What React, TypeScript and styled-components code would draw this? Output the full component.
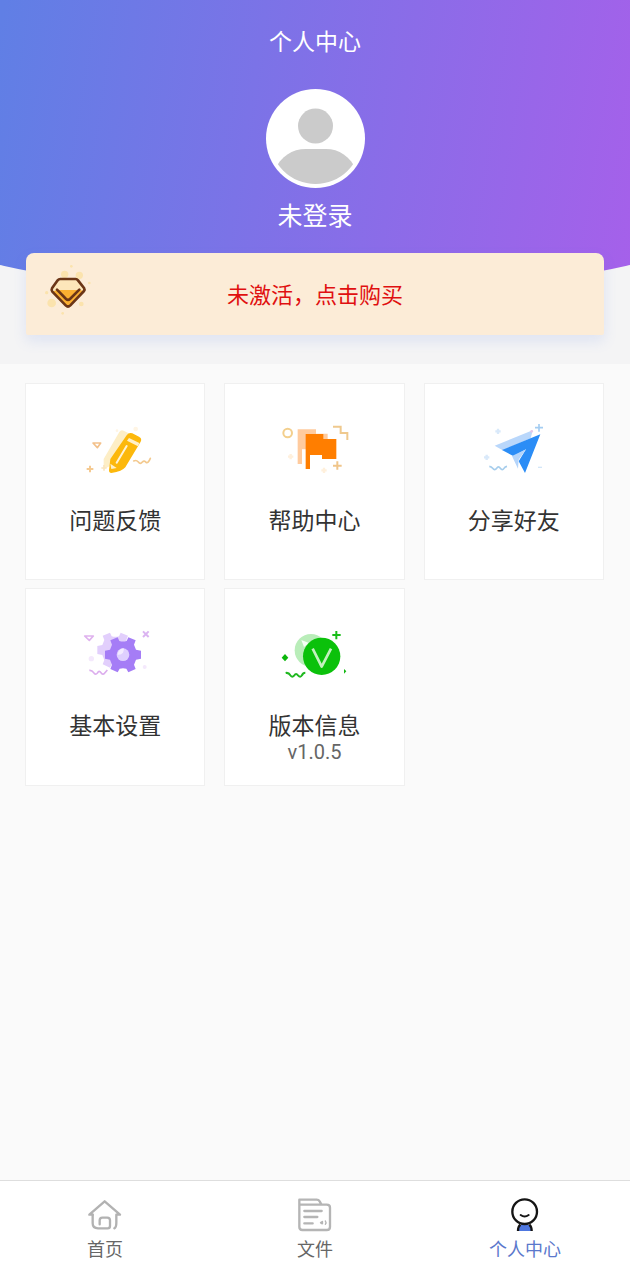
import type { ReactNode } from 'react';
import styled, { createGlobalStyle } from 'styled-components';

const GlobalStyle = createGlobalStyle`
  * { box-sizing: border-box; }
  body {
    margin: 0;
    background: #fafafa;
    font-family: "Noto Sans CJK SC", "Noto Sans", sans-serif;
  }
  button {
    border: 0;
    margin: 0;
    font-family: inherit;
    cursor: pointer;
  }
`;

const Page = styled.div`
  min-height: 100vh;
  display: flex;
  flex-direction: column;
`;

const Hero = styled.header`
  position: relative;
  overflow: hidden;
  display: flex;
  flex-direction: column;
  align-items: center;
  padding: 23px 26px 29px;
  background: #f4f4f5;

  &::before {
    content: "";
    position: absolute;
    top: 0;
    left: -20%;
    width: 140%;
    height: 295px;
    border-radius: 0 0 50% 50% / 0 0 100px 100px;
    background: linear-gradient(99deg, #607fe5 14%, #a660ea 87%);
  }

  > * { position: relative; }
`;

const Title = styled.h1`
  margin: 0 0 32px;
  font-size: 23px;
  line-height: 34px;
  font-weight: 400;
  color: #fff;
`;

const Profile = styled.button`
  display: flex;
  flex-direction: column;
  align-items: center;
  gap: 9px;
  margin-bottom: 22px;
  padding: 0;
  background: none;
  color: #fff;
  font-size: 25px;
  line-height: 34px;
`;

const Banner = styled.button`
  width: 100%;
  display: grid;
  grid-template-columns: 48px 1fr 48px;
  align-items: center;
  padding: 11px 18px;
  border-radius: 8px 8px 2px 2px;
  background: #fcecd7;
  box-shadow: 0 6px 14px rgba(90, 130, 230, 0.14);
  color: #e01010;
  font-size: 22px;
  line-height: 32px;

  > span { padding-bottom: 3px; }
`;

const Grid = styled.main`
  flex: 1;
  display: grid;
  grid-template-columns: repeat(3, 1fr);
  align-content: start;
  gap: 8px 19px;
  padding: 19px 26px 19px 25px;
`;

const Card = styled.button`
  && { border: 1px solid #f0f0f0; }
  display: flex;
  flex-direction: column;
  align-items: center;
  min-height: 197px;
  padding: 36px 0 19px;
  background: #fff;
`;

const CardLabel = styled.span`
  margin-top: 23px;
  font-size: 23px;
  line-height: 28px;
  color: #333;
`;

const CardNote = styled.span`
  font-family: Roboto, sans-serif;
  font-size: 20px;
  line-height: 28px;
  color: #666;
`;

const TabBar = styled.nav`
  display: grid;
  grid-template-columns: repeat(3, 1fr);
  height: 100px;
  border-top: 1px solid #dedede;
  background: #fff;
`;

const Tab = styled.a<{ $active?: boolean }>`
  display: flex;
  flex-direction: column;
  align-items: center;
  padding-top: 16px;
  font-size: 18px;
  line-height: 30px;
  text-decoration: none;
  color: ${({ $active }) => ($active ? '#5b78cc' : '#666')};
`;

const Avatar = () => (
  <svg width="99" height="99" viewBox="0 0 99 99" aria-hidden="true">
    <defs>
      <clipPath id="avatar-clip"><circle cx="49.500" cy="49.500" r="45.500" /></clipPath>
    </defs>
    <circle cx="49.500" cy="49.500" r="49.500" fill="#fff" />
    <g fill="#cbcbcb" clipPath="url(#avatar-clip)">
      <circle cx="49.500" cy="37" r="17.500" />
      <path d="M8 82C15 67 26 60 40 60H60C73 60 84 67 91 82V99H8Z" />
    </g>
  </svg>
);

const GemIcon = () => (
  <svg width="48" height="60" viewBox="72 72 144 180" fill="none" aria-hidden="true">
    <g fill="#fbe3ad">
      <circle cx="134" cy="103" r="11" />
      <circle cx="178" cy="106" r="11" />
      <circle cx="95" cy="189" r="13" />
      <circle cx="154" cy="79" r="4" />
      <circle cx="80" cy="158" r="5" />
      <circle cx="184" cy="192" r="7" />
      <circle cx="208" cy="129" r="4" />
      <circle cx="128" cy="220" r="4" />
    </g>
    <path d="M121 117H167Q171 117 174 121L192 144Q195 149 192 153L151 196Q144 203 137 196L97 155Q93 150 96 145L113 121Q116 117 121 117Z" fill="#fde6ba" />
    <path d="M110 150H178L192 153L151 196Q144 203 137 196L97 155Z" fill="#fbb031" />
    <path d="M121 117H167Q171 117 174 121L192 144Q195 149 192 153L151 196Q144 203 137 196L97 155Q93 150 96 145L113 121Q116 117 121 117Z" stroke="#6b3617" strokeWidth="8" strokeLinejoin="round" />
    <path d="M111 149L138 177Q144 182 150 177L178 149" stroke="#6b3617" strokeWidth="8" strokeLinecap="round" />
  </svg>
);

const CardIcon = ({ children }: { children: ReactNode }) => (
  <svg width="80" height="62" viewBox="-2 15 240 186" fill="none" aria-hidden="true">
    {children}
  </svg>
);

const PencilIcon = () => (
  <CardIcon>
    <path d="M84 132L131 51Q136 43 144 47L162 56L107 151L84 163Z" fill="#fdeec6" />
    <path d="M104 132L153 61Q160 51 170 55L190 65Q200 70 195 80L149 157Q140 169 107 174Q100 174 100 166Z" fill="#fcb80c" />
    <path d="M160 69L191 84L187 94L154 77Z" fill="#fff0c9" />
    <path d="M153 93L123 143" stroke="#fff3d5" strokeWidth="6" strokeLinecap="round" />
    <path d="M104 146L123 159L107 162Z" fill="#fff0c9" />
    <path d="M52 84H75L65 98Z" stroke="#f3c18b" strokeWidth="5" strokeLinejoin="round" />
    <path d="M43 152V172M33 162H53" stroke="#f5ca91" strokeWidth="6" />
    <path d="M85 150V167M77 159H93" stroke="#fae5bf" strokeWidth="5" />
    <path d="M174 138Q182 134 188 141Q194 149 200 141Q206 135 211 142Q217 147 224 130" stroke="#f3c98e" strokeWidth="5" strokeLinecap="round" />
    <circle cx="180" cy="42" r="7" fill="#fff5e4" />
    <circle cx="124" cy="47" r="4" fill="#fff5e4" />
  </CardIcon>
);

const FlagIcon = () => (
  <CardIcon>
    <path d="M69 43H124V56H159V72H100V103H82V147H69Z" fill="#ffcb9e" />
    <path d="M93 57H146V72H185V132H142V120H106V162H93Z" fill="#ff7e00" />
    <circle cx="39" cy="54" r="13" stroke="#f3cf8d" strokeWidth="6" />
    <path d="M175 35H198V54H218V75" stroke="#efc98e" strokeWidth="6" />
    <path d="M188 139V164M175 152H201" stroke="#f0c58a" strokeWidth="6" />
    <path d="M48 117V133M40 125H56M148 158V174M140 166H156" stroke="#fff0dc" strokeWidth="7" />
  </CardIcon>
);

const PlaneIcon = () => (
  <CardIcon>
    <path d="M60 92L174 46L168 70L84 106Z" fill="#b9d7fb" />
    <path d="M82 105L197 58L151 174L132 139L154 103L117 124Z" fill="#2b8df6" />
    <path d="M112 123L154 103L132 134L130 161L120 140Z" fill="#b5d5fb" />
    <path d="M193 27V50M181 38H205" stroke="#a4cdf2" strokeWidth="5" />
    <path d="M70 41V57M62 49H78M36 119V135M28 127H44" stroke="#d9e9fa" strokeWidth="7" />
    <path d="M44 154Q50 155 54 160Q60 168 66 160Q71 151 77 160Q83 168 88 160Q91 155 97 154" stroke="#a6cdec" strokeWidth="5" />
    <path d="M190 157H202" stroke="#d3e6f8" strokeWidth="4" />
    <circle cx="171" cy="49" r="4" fill="#e6c8e9" />
  </CardIcon>
);

const GEAR =
  'M-16 -52L-11 -41Q0 -38 11 -41L16 -52L38 -43L33 -30L39 -15L54 -12V12L39 15L33 30L38 43L16 53L10 42Q0 39 -10 42L-16 53L-38 43L-33 30L-39 15L-54 12V-12L-39 -15L-33 -30L-38 -43Z';

const GearIcon = () => (
  <CardIcon>
    <path transform="translate(119 90)" d={GEAR} fill="#e2cffc" />
    <path transform="translate(142 104)" d={GEAR} fill="#a57df6" />
    <circle cx="142" cy="104" r="19" fill="#dfd0ff" />
    <path d="M126 104Q137 105 142 98Q146 91 144 85A19 19 0 0 0 126 104Z" fill="#f3ecff" />
    <path d="M27 48H53L41 61Z" stroke="#dfb2ee" strokeWidth="5" strokeLinejoin="round" />
    <path d="M202 34L219 51M219 34L202 51" stroke="#dbb4f1" strokeWidth="6" />
    <path d="M41 151Q49 150 54 158Q59 167 66 158Q70 150 76 158Q83 167 88 158L95 150" stroke="#dcaeed" strokeWidth="5" />
    <circle cx="47" cy="116" r="8" fill="#f4e9fc" />
    <circle cx="207" cy="141" r="6" fill="#f4e9fc" />
  </CardIcon>
);

const VersionIcon = () => (
  <CardIcon>
    <circle cx="109" cy="91" r="49" fill="#b9edb9" />
    <path d="M80 60L103 69L88 81Z" fill="#f7fff7" />
    <circle cx="141" cy="109" r="56" fill="#0bc10b" />
    <path d="M114 86L141 140L169 86" stroke="#c3f1be" strokeWidth="8" strokeLinejoin="round" />
    <path d="M185 33V58M173 45H198" stroke="#19bd19" strokeWidth="6" />
    <path d="M31 102L41 113L31 124L21 113Z" fill="#0bb70b" />
    <path d="M33 159Q42 157 47 166Q52 174 59 166Q64 158 70 166Q77 174 82 166Q85 158 92 158" stroke="#20b820" strokeWidth="6" />
    <path d="M208 147L215 154L208 161Z" fill="#14b814" />
  </CardIcon>
);

const HomeIcon = () => (
  <svg width="36" height="36" viewBox="51 81 108 108" fill="none" stroke="#b2b2b2" strokeWidth="7" strokeLinecap="round" strokeLinejoin="round" aria-hidden="true">
    <path d="M68 134H58L104 94L150 134H139V158Q139 172 133 175" />
    <path d="M68 134V160Q68 175 84 175H113Q120 175 120 168V151Q120 143 112 143H97Q89 143 89 151V163" />
  </svg>
);

const FileIcon = () => (
  <svg width="36" height="36" viewBox="681 81 108 108" fill="none" stroke="#b5b5b5" strokeWidth="7" strokeLinecap="round" strokeLinejoin="round" aria-hidden="true">
    <path d="M688 104V171Q688 180 697 180H770Q780 180 780 170V113Q780 104 770 104H688V89H740Q746 89 749 94L754 103" />
    <path d="M703 123H755M703 141H742M703 160H728" />
    <path d="M757 155L752 158L757 161Z" strokeWidth="5" />
    <path d="M766 153Q770 158 766 163" strokeWidth="4" />
  </svg>
);

const PersonIcon = () => (
  <svg width="36" height="36" viewBox="111 81 108 108" fill="none" stroke="#151515" aria-hidden="true">
    <path d="M144 183Q145 161 164 161T186 183Z" fill="#4e77e0" stroke="none" />
    <path d="M144 183Q144 170 151 164M178 164Q185 170 185 183" strokeWidth="7" />
    <circle cx="164" cy="125" r="37" fill="#fff" strokeWidth="7" />
    <path d="M152 135Q164 144 176 135" strokeWidth="6" strokeLinecap="round" />
  </svg>
);

const features = [
  { label: '问题反馈', Icon: PencilIcon },
  { label: '帮助中心', Icon: FlagIcon },
  { label: '分享好友', Icon: PlaneIcon },
  { label: '基本设置', Icon: GearIcon },
  { label: '版本信息', Icon: VersionIcon, note: 'v1.0.5' },
];

const tabs = [
  { label: '首页', href: '#home', Icon: HomeIcon },
  { label: '文件', href: '#files', Icon: FileIcon },
  { label: '个人中心', href: '#profile', Icon: PersonIcon, active: true },
];

export default function App() {
  return (
    <Page>
      <GlobalStyle />
      <Hero>
        <Title>个人中心</Title>
        <Profile type="button">
          <Avatar />
          <span>未登录</span>
        </Profile>
        <Banner type="button">
          <GemIcon />
          <span>未激活，点击购买</span>
        </Banner>
      </Hero>
      <Grid>
        {features.map(({ label, Icon, note }) => (
          <Card type="button" key={label}>
            <Icon />
            <CardLabel>{label}</CardLabel>
            {note && <CardNote>{note}</CardNote>}
          </Card>
        ))}
      </Grid>
      <TabBar>
        {tabs.map(({ label, href, Icon, active }) => (
          <Tab key={label} href={href} $active={active} aria-current={active ? 'page' : undefined}>
            <Icon />
            {label}
          </Tab>
        ))}
      </TabBar>
    </Page>
  );
}
